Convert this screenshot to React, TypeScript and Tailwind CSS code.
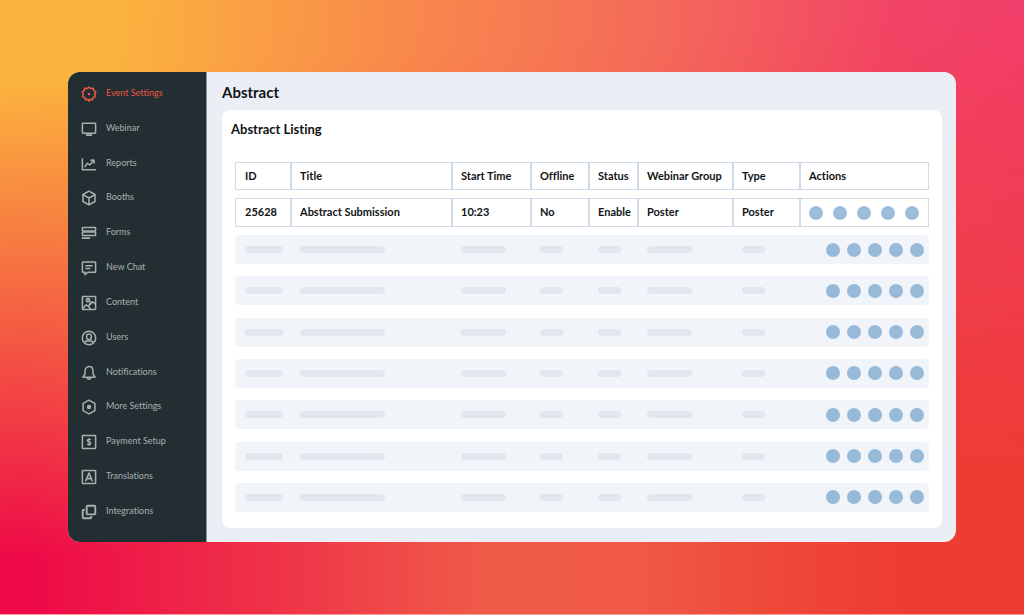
import type { ReactNode } from "react";
import clsx from "clsx";

interface NavItem {
  label: string;
  icon: ReactNode;
  active?: boolean;
}

interface AbstractRow {
  id: number;
  title: string;
  startTime: string;
  offline: string;
  status: string;
  group: string;
  type: string;
}

const navItems: NavItem[] = [
  {
    label: "Event Settings",
    active: true,
    icon: (
      <>
        <path d="M8 1.1 10 2.6 12.4 2.2 12.8 4.7 14.8 6.100 13.7 8.100 14.4 10.600 12.300 11.500 11.400 13.900 9.200 13.200 8 15 6.800 13.200 4.600 13.900 3.700 11.500 1.600 10.600 2.300 8.100 1.200 6.100 3.200 4.700 3.600 2.200 6 2.600Z" strokeWidth="1.6" />
        <circle cx="8" cy="8" r="1.3" fill="currentColor" stroke="none" />
      </>
    ),
  },
  {
    label: "Webinar",
    icon: (
      <>
        <rect x="1.4" y="2.2" width="13.2" height="10" rx="0.6" />
        <path d="M5 14.2h6" strokeWidth="1.8" />
      </>
    ),
  },
  {
    label: "Reports",
    icon: <path d="M1.4 2.2v11.6h13.6M3.6 11.2 6.2 7.4l2.6 1.5 3.9-4.6M9.4 4.3l3.5-.3.3 3.6" />,
  },
  {
    label: "Booths",
    icon: <path d="M8 1.2 14 4.5v7L8 14.8 2 11.5v-7ZM2.3 4.8 8 8l5.7-3.2M8 8v6.5" />,
  },
  {
    label: "Forms",
    icon: (
      <>
        <rect x="1.4" y="2.5" width="13.2" height="3.5" rx="0.6" />
        <rect x="1.4" y="7" width="13.2" height="3.5" rx="0.6" />
        <path d="M.8 13.2h8.4" strokeWidth="1.8" />
      </>
    ),
  },
  {
    label: "New Chat",
    icon: (
      <path d="M2 2.1h12a.6.6 0 0 1 .6.6v9a.6.6 0 0 1-.6.6H6.8L4 14.7v-2.4H2a.6.6 0 0 1-.6-.6v-9A.6.6 0 0 1 2 2.1ZM4.5 5.7h7M4.5 8.5h4.8" />
    ),
  },
  {
    label: "Content",
    icon: (
      <>
        <rect x="1.4" y="1.4" width="13.2" height="13.2" rx="0.6" />
        <circle cx="7" cy="5.3" r="1.7" fill="currentColor" fillOpacity="0.5" />
        <path d="m1.8 13.4 3.4-3.6 2.2 1.7 3-5.1M7.4 11.5l2.2 2.6M9 9.6l2.8-2.8 2.8 2.6" />
      </>
    ),
  },
  {
    label: "Users",
    icon: (
      <>
        <circle cx="8" cy="8" r="6.7" />
        <rect x="5.7" y="4" width="4.6" height="5.6" rx="2.2" />
        <path d="M3.4 12.6c.6-1 1.6-1.6 3-1.7h3.2c1.4.1 2.4.7 3 1.7" />
      </>
    ),
  },
  {
    label: "Notifications",
    icon: (
      <path d="M8 1.6c-2.6 0-4 2-4 4.5V9l-2 2.9v.4h12v-.4L12 9V6.100C12 3.600 10.600 1.600 8 1.600ZM6.300 12.600c.2 2.200 3.200 2.200 3.400 0" />
    ),
  },
  {
    label: "More Settings",
    icon: (
      <>
        <path d="M8 1.2 13.9 4.4v7.2L8 14.8 2.1 11.6V4.4Z" />
        <circle cx="8" cy="8" r="2.2" fill="currentColor" stroke="none" />
      </>
    ),
  },
  {
    label: "Payment Setup",
    icon: (
      <>
        <rect x="1.4" y="1.4" width="13.2" height="13.2" rx="0.6" />
        <path d="M9.9 6.1C9.5 5.2 6.2 4.8 6.2 6.6c0 1.7 3.7 1 3.7 2.8 0 1.7-3.3 1.6-3.8.4M8 4v8" strokeWidth="1.2" />
      </>
    ),
  },
  {
    label: "Translations",
    icon: (
      <>
        <rect x="1.4" y="1.4" width="13.2" height="13.2" rx="0.6" />
        <path d="M4.6 12.3 8 4l3.4 8.3M5.8 9.6h4.4" strokeWidth="1.6" />
      </>
    ),
  },
  {
    label: "Integrations",
    icon: (
      <>
        <rect x="5.7" y="1.8" width="8.6" height="8.6" rx="1" strokeWidth="1.9" />
        <path d="M3.8 5.7H2.7a1 1 0 0 0-1 1v6.600a1 1 0 0 0 1 1h6.600a1 1 0 0 0 1-1v-1.200" strokeWidth="1.900" />
      </>
    ),
  },
];

const columns = ["ID", "Title", "Start Time", "Offline", "Status", "Webinar Group", "Type", "Actions"];

const rows: AbstractRow[] = [
  {
    id: 25628,
    title: "Abstract Submission",
    startTime: "10:23",
    offline: "No",
    status: "Enable",
    group: "Poster",
    type: "Poster",
  },
];

const actions = ["View", "Edit", "Assign", "Duplicate", "Delete"];

const barWidths = ["w-[38px]", "w-[85px]", "w-[45px]", "w-[23px]", "w-[23px]", "w-[45px]", "w-[23px]"];

const gridCols = "grid grid-cols-[55fr_161fr_79fr_58fr_49fr_95fr_67fr_130fr]";
const cell =
  "flex items-center whitespace-nowrap border-y border-l-2 border-[#cfdce7] pl-2 text-left font-bold first:border-l first:pl-[9px] last:border-r";

function Sidebar() {
  return (
    <nav className="flex w-[139px] shrink-0 flex-col justify-between border-r border-[#8d9497] bg-[#232e32] pt-3.5 pb-[22px] pl-[13px]">
      {navItems.map((item) => (
        <a
          key={item.label}
          href="#"
          className={clsx(
            "flex items-center gap-[9px] text-[9px] leading-4",
            item.active ? "text-[#ea5546]" : "text-[#a9afb1]"
          )}
        >
          <svg
            className="h-4 w-4 shrink-0"
            viewBox="0 0 16 16"
            fill="none"
            stroke="currentColor"
            strokeWidth={1.5}
            strokeLinejoin="round"
          >
            {item.icon}
          </svg>
          <span className="-mt-0.5">{item.label}</span>
        </a>
      ))}
    </nav>
  );
}

function SkeletonRow() {
  return (
    <tr className={`${gridCols} h-[29px] rounded-sm bg-[#f1f4f8]`}>
      {barWidths.map((width, i) => (
        <td key={i} className="flex items-center pl-2.5">
          <span className={`h-[7px] rounded-full bg-[#e2e6ee] ${width}`} />
        </td>
      ))}
      <td className="flex items-center justify-end gap-[7px] pr-[5px]">
        {actions.map((action) => (
          <span key={action} className="h-3.5 w-3.5 rounded-full bg-[#98bad9]" />
        ))}
      </td>
    </tr>
  );
}

export default function App() {
  return (
    <div className="relative isolate flex min-h-screen flex-col border-b border-[#f79a9c] bg-[linear-gradient(90deg,#ee0a48_3%,#ef3548_28%,#f05c48_48%,#f05a46_62%,#ee4a3a_74%,#ee3c32_88%)] px-[68px] py-[72px] font-[Lato,sans-serif] text-[#111416] [font-variant-ligatures:none]">
      {/* Upper half of the backdrop, faded into the lower one */}
      <div className="absolute inset-0 -z-10 bg-[linear-gradient(94deg,#fbb43e_10%,#f98c4a_36%,#f46a5a_62%,#f24466_84%,#f23c6c_100%)] mask-[linear-gradient(176deg,black_12%,transparent_82%)]" />

      <div className="flex flex-1 overflow-hidden rounded-xl bg-[#ebeef4]">
        <Sidebar />

        <main className="flex min-w-0 flex-1 flex-col pt-2.5 pr-3.5 pb-3.5 pl-[15px]">
          <h1 className="text-[15px] leading-5 font-bold">Abstract</h1>

          <section className="mt-2 flex flex-1 flex-col rounded-lg bg-white px-[13px] pt-2.5 pb-4">
            <h2 className="-ml-1 text-[13px] leading-[18px] font-bold">Abstract Listing</h2>

            <table className="mt-6 flex flex-1 flex-col text-[11px]">
              <thead className="block">
                <tr className={`${gridCols} h-7`}>
                  {columns.map((column) => (
                    <th key={column} scope="col" className={cell}>
                      {column}
                    </th>
                  ))}
                </tr>
              </thead>
              <tbody className="mt-2 block">
                {rows.map((row) => (
                  <tr key={row.id} className={`${gridCols} h-[29px]`}>
                    <td className={cell}>{row.id}</td>
                    <td className={cell}>{row.title}</td>
                    <td className={cell}>{row.startTime}</td>
                    <td className={cell}>{row.offline}</td>
                    <td className={cell}>{row.status}</td>
                    <td className={cell}>{row.group}</td>
                    <td className={cell}>{row.type}</td>
                    <td className={`${cell} gap-2.5`}>
                      {actions.map((action) => (
                        <button
                          key={action}
                          type="button"
                          aria-label={action}
                          className="h-3.5 w-3.5 rounded-full bg-[#9dbedc]"
                        />
                      ))}
                    </td>
                  </tr>
                ))}
              </tbody>
              <tbody aria-hidden="true" className="mt-2 flex flex-1 flex-col justify-between gap-2">
                {Array.from({ length: 7 }, (_, i) => (
                  <SkeletonRow key={i} />
                ))}
              </tbody>
            </table>
          </section>
        </main>
      </div>
    </div>
  );
}
